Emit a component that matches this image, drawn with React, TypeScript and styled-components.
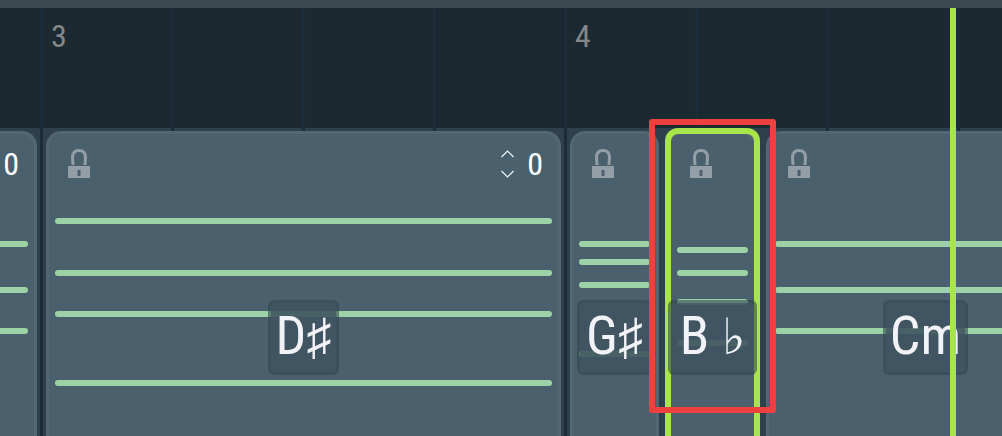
import React from "react";
import styled, { createGlobalStyle } from "styled-components";

const color = {
  frame: "#3c494f",
  ruler: "#1c2931",
  rulerLine: "#1a2d38",
  lane: "#2d404c",
  clip: "#4a616d",
  clipEdge: "#536773",
  note: "#9dd2a6",
  accent: "#a8e54a",
  alert: "#ec413f",
  icon: "#949ea6",
  text: "#f1f3f8",
};

const GlobalStyle = createGlobalStyle`
  * { box-sizing: border-box; }
  body {
    margin: 0;
    background: ${color.lane};
    font-family: "Roboto Condensed", "Liberation Sans Narrow", "DejaVu Sans Condensed", sans-serif;
  }
`;

const Editor = styled.main`
  display: flex;
  flex-direction: column;
  min-height: 100vh;
  border-top: 8px solid ${color.frame};
  overflow: hidden;
`;

const Timeline = styled.div`
  position: relative;
  flex: 1;
  display: flex;
  flex-direction: column;
  background: linear-gradient(${color.ruler} 120px, ${color.lane} 120px);
`;

const Grid = styled.div`
  position: absolute;
  inset: 0;
  display: flex;
  padding-left: 40px;
  overflow: hidden;
`;

const Beat = styled.div`
  flex: 0 0 131px;
  border-left: 3px solid ${color.rulerLine};
`;

const Ruler = styled.header`
  position: relative;
  display: flex;
  height: 120px;
  padding-left: 40px;
  overflow: hidden;
`;

const Bar = styled.div`
  flex: 0 0 524px;
  padding: 10px 11px;
  font-size: 32px;
  line-height: 36px;
  color: #85888a;
`;

const Lane = styled.section`
  position: relative;
  flex: 1;
  display: flex;
  gap: 9px;
  min-height: 308px;
  padding-top: 3px;
  overflow: clip;
  overflow-clip-margin: 12px;
`;

const ClipBox = styled.article<{ $width: number; $cut?: boolean; $selected?: boolean }>`
  position: relative;
  z-index: ${(p) => (p.$selected ? 1 : 0)};
  flex: 0 0 ${(p) => p.$width}px;
  border: 3px solid ${color.clipEdge};
  border-bottom: 0;
  border-left-width: ${(p) => (p.$cut ? 0 : 3)}px;
  border-radius: ${(p) => (p.$cut ? "0 15px 0 0" : "15px 15px 0 0")};
  background: ${color.clip};
`;

const ClipHeader = styled.div<{ $cut?: boolean }>`
  display: flex;
  align-items: center;
  justify-content: ${(p) => (p.$cut ? "flex-end" : "space-between")};
  height: 60px;
  padding: 0 15px 0 ${(p) => (p.$cut ? 0 : 19)}px;
`;

const LockButton = styled.button`
  display: flex;
  padding: 0;
  border: 0;
  background: none;
  color: ${color.icon};
`;

const Octave = styled.div`
  display: flex;
  align-items: center;
  gap: 13px;
  font-size: 32px;
  line-height: 36px;
  color: #fff;
`;

const Stepper = styled.div`
  display: flex;
  flex-direction: column;
  gap: 12px;
`;

const StepButton = styled.button`
  display: flex;
  padding: 0;
  border: 0;
  background: none;
  color: ${color.text};
`;

const Note = styled.div<{ $top: number; $cut?: boolean }>`
  position: absolute;
  top: ${(p) => p.$top}px;
  left: ${(p) => (p.$cut ? 0 : 6)}px;
  right: 6px;
  height: 6px;
  border-radius: ${(p) => (p.$cut ? "0 3px 3px 0" : "3px")};
  background: ${color.note};
`;

const Selection = styled.div`
  position: absolute;
  inset: -6px -6px 0;
  border: 6px solid ${color.accent};
  border-bottom: 0;
  border-radius: 13px 13px 0 0;
`;

const ChordRow = styled.div`
  position: relative;
  display: flex;
  justify-content: center;
  margin: 106px -3px 0;
`;

const Chord = styled.h2<{ $width: number }>`
  flex: 0 0 ${(p) => p.$width}px;
  height: 75px;
  margin: 0;
  border: 3px solid rgba(48, 70, 81, 0.6);
  border-radius: 6px;
  background: rgba(63, 84, 95, 0.9);
  background-clip: padding-box;
  color: ${color.text};
  font-size: 54px;
  font-weight: 400;
  line-height: 66px;
  text-align: center;
  white-space: pre;
`;

const Accidental = styled.span`
  font-family: "Liberation Sans", "DejaVu Sans", sans-serif;
  font-size: 50px;
  line-height: 1;
`;

const Callout = styled.div`
  position: absolute;
  top: -15px;
  left: -22px;
  right: -22px;
  height: 294px;
  border: 6px solid ${color.alert};
  border-radius: 3px;
  pointer-events: none;
`;

const Playhead = styled.div`
  position: absolute;
  z-index: 2;
  top: 0;
  bottom: 0;
  left: 950px;
  width: 6px;
  background: ${color.accent};
`;

const LockIcon = () => (
  <svg width="22" height="30" viewBox="0 0 22 30" aria-hidden="true">
    <path
      d="M5 16L4.5 8.5C4.5 4 7 1.5 11 1.5S17.5 4 17.5 8.5L17 16"
      fill="none"
      stroke="currentColor"
      strokeWidth="3"
    />
    <path
      d="M0 17H22V29H0ZM9.5 21V27H12.5V21Z"
      fill="currentColor"
      fillRule="evenodd"
    />
  </svg>
);

const Chevron = ({ down }: { down?: boolean }) => (
  <svg width="13" height="8" viewBox="0 0 13 8" aria-hidden="true">
    <path
      d={down ? "M0.5 1L6.5 7L12.5 1" : "M0.5 7L6.5 1L12.5 7"}
      fill="none"
      stroke="currentColor"
      strokeWidth="1.2"
    />
  </svg>
);

type ClipData = {
  id: string;
  width: number;
  notes: number[];
  chord?: string;
  accidental?: string;
  chordWidth?: number;
  octave?: number;
  cut?: boolean;
  selected?: boolean;
};

const clips: ClipData[] = [
  { id: "prev", width: 37, notes: [107, 153, 194], octave: 0, cut: true },
  { id: "dsharp", width: 515, notes: [84, 136, 177, 246], chord: "D", accidental: "♯", chordWidth: 71, octave: 0 },
  { id: "gsharp", width: 89, notes: [107, 125, 148, 217], chord: "G", accidental: "♯", chordWidth: 75 },
  { id: "bflat", width: 89, notes: [113, 136, 165, 206], chord: "B ", accidental: "♭", chordWidth: 89, selected: true },
  { id: "cminor", width: 319, notes: [107, 153, 194], chord: "Cm", chordWidth: 85 },
];

const Clip = ({ clip }: { clip: ClipData }) => (
  <ClipBox $width={clip.width} $cut={clip.cut} $selected={clip.selected}>
    <ClipHeader $cut={clip.cut}>
      {!clip.cut && (
        <LockButton type="button" aria-label="Lock chord">
          <LockIcon />
        </LockButton>
      )}
      {clip.octave !== undefined && (
        <Octave>
          {!clip.cut && (
            <Stepper>
              <StepButton type="button" aria-label="Octave up">
                <Chevron />
              </StepButton>
              <StepButton type="button" aria-label="Octave down">
                <Chevron down />
              </StepButton>
            </Stepper>
          )}
          <span>{clip.octave}</span>
        </Octave>
      )}
    </ClipHeader>
    {clip.notes.map((top) => (
      <Note key={top} $top={top} $cut={clip.cut} />
    ))}
    {clip.selected && <Selection />}
    {clip.chord && (
      <ChordRow>
        <Chord $width={clip.chordWidth ?? 71}>
          {clip.chord}
          {clip.accidental && <Accidental>{clip.accidental}</Accidental>}
        </Chord>
      </ChordRow>
    )}
    {clip.selected && <Callout />}
  </ClipBox>
);

export default function App() {
  return (
    <>
      <GlobalStyle />
      <Editor>
        <Timeline>
          <Grid aria-hidden="true">
            {Array.from({ length: 16 }, (_, i) => (
              <Beat key={i} />
            ))}
          </Grid>
          <Ruler>
            <Bar>3</Bar>
            <Bar>4</Bar>
          </Ruler>
          <Lane>
            {clips.map((clip) => (
              <Clip key={clip.id} clip={clip} />
            ))}
          </Lane>
          <Playhead />
        </Timeline>
      </Editor>
    </>
  );
}
